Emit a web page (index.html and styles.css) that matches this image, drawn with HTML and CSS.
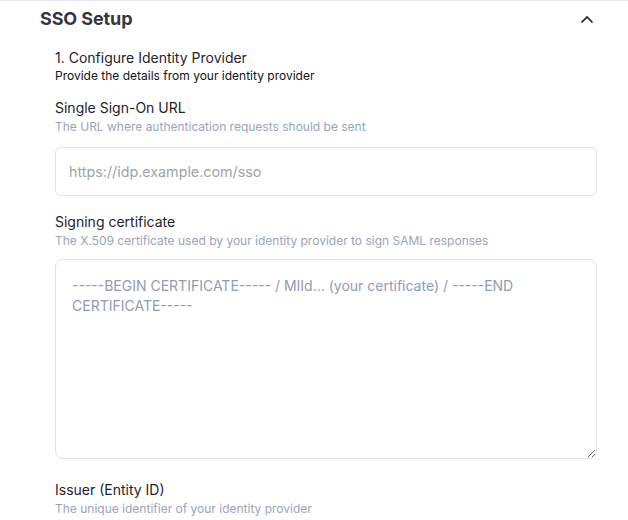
FILE: index.html
```html
<!DOCTYPE html>
<html lang="en">
<head>
<meta charset="utf-8">
<link rel="stylesheet" href="styles.css">
</head>
<body>
<section class="card">
  <header class="card-head">
    <h2 class="title">SSO Setup</h2>
    <button class="toggle" aria-label="Collapse">
      <svg width="14" height="9" viewBox="0 0 14 9"><path d="M1.5 7.5 L7 2 L12.5 7.5" fill="none" stroke="#1f2329" stroke-width="1.7"/></svg>
    </button>
  </header>
  <div class="card-body">
    <div class="step">
      <div class="step-title">1. Configure Identity Provider</div>
      <div class="step-sub">Provide the details from your identity provider</div>
    </div>
    <div class="field field-url">
      <label class="label">Single Sign-On URL</label>
      <div class="hint">The URL where authentication requests should be sent</div>
      <input class="input" type="text" placeholder="https://idp.example.com/sso">
    </div>
    <div class="field field-cert">
      <label class="label">Signing certificate</label>
      <div class="hint">The X.509 certificate used by your identity provider to sign SAML responses</div>
      <textarea class="textarea" placeholder="-----BEGIN CERTIFICATE----- / MIId... (your certificate) / -----END CERTIFICATE-----"></textarea>
    </div>
    <div class="field field-issuer">
      <label class="label">Issuer (Entity ID)</label>
      <div class="hint">The unique identifier of your identity provider</div>
    </div>
  </div>
</section>
</body>
</html>
```
FILE: styles.css
```css
* { box-sizing: border-box; }
body {
  margin: 0;
  background: #fff;
  font-family: Inter, "Noto Sans", sans-serif;
  color: #1f2329;
}
.card {
  border-top: 1px solid #e6e8ec;
}
.card-head {
  display: flex;
  align-items: center;
  justify-content: space-between;
  padding: 0 34px 0 40px;
  height: 36px;
}
.title {
  margin: 0;
  font-size: 18px;
  line-height: 22px;
  font-weight: 700;
  color: #34373d;
  letter-spacing: -0.1px;
}
.toggle {
  border: 0;
  background: none;
  padding: 0;
  display: flex;
  width: 14px;
  height: 9px;
}
.card-body {
  padding: 12px 31px 0 55px;
  display: flex;
  flex-direction: column;
}
.step-title {
  font-size: 14px;
  line-height: 18px;
  color: #1f2329;
}
.step-sub {
  margin-top: 1px;
  font-size: 12px;
  line-height: 16px;
  color: #111318;
}
.field {
  display: flex;
  flex-direction: column;
}
.field-url { margin-top: 15px; }
.field-cert { margin-top: 17px; }
.field-issuer { margin-top: 22px; }
.label {
  font-size: 14px;
  line-height: 18px;
  color: #1f2329;
}
.hint {
  font-size: 12px;
  line-height: 16px;
  margin-top: 2px;
  color: #9aa4bb;
}
.input {
  margin-top: 12px;
  height: 49px;
  border: 1px solid #dfe1e5;
  border-radius: 6px;
  padding: 0 13px;
  font-family: inherit;
  font-size: 14.3px;
  color: #1f2329;
  outline: none;
}
.input::placeholder { color: #a0a3a9; }
.textarea {
  margin-top: 10px;
  height: 200px;
  border: 1px solid #dfe1e5;
  border-radius: 8px;
  padding: 16px 16px;
  font-family: inherit;
  font-size: 14px;
  line-height: 20px;
  color: #1f2329;
  resize: vertical;
  outline: none;
}
.textarea::placeholder { color: #929bb5; }
```
